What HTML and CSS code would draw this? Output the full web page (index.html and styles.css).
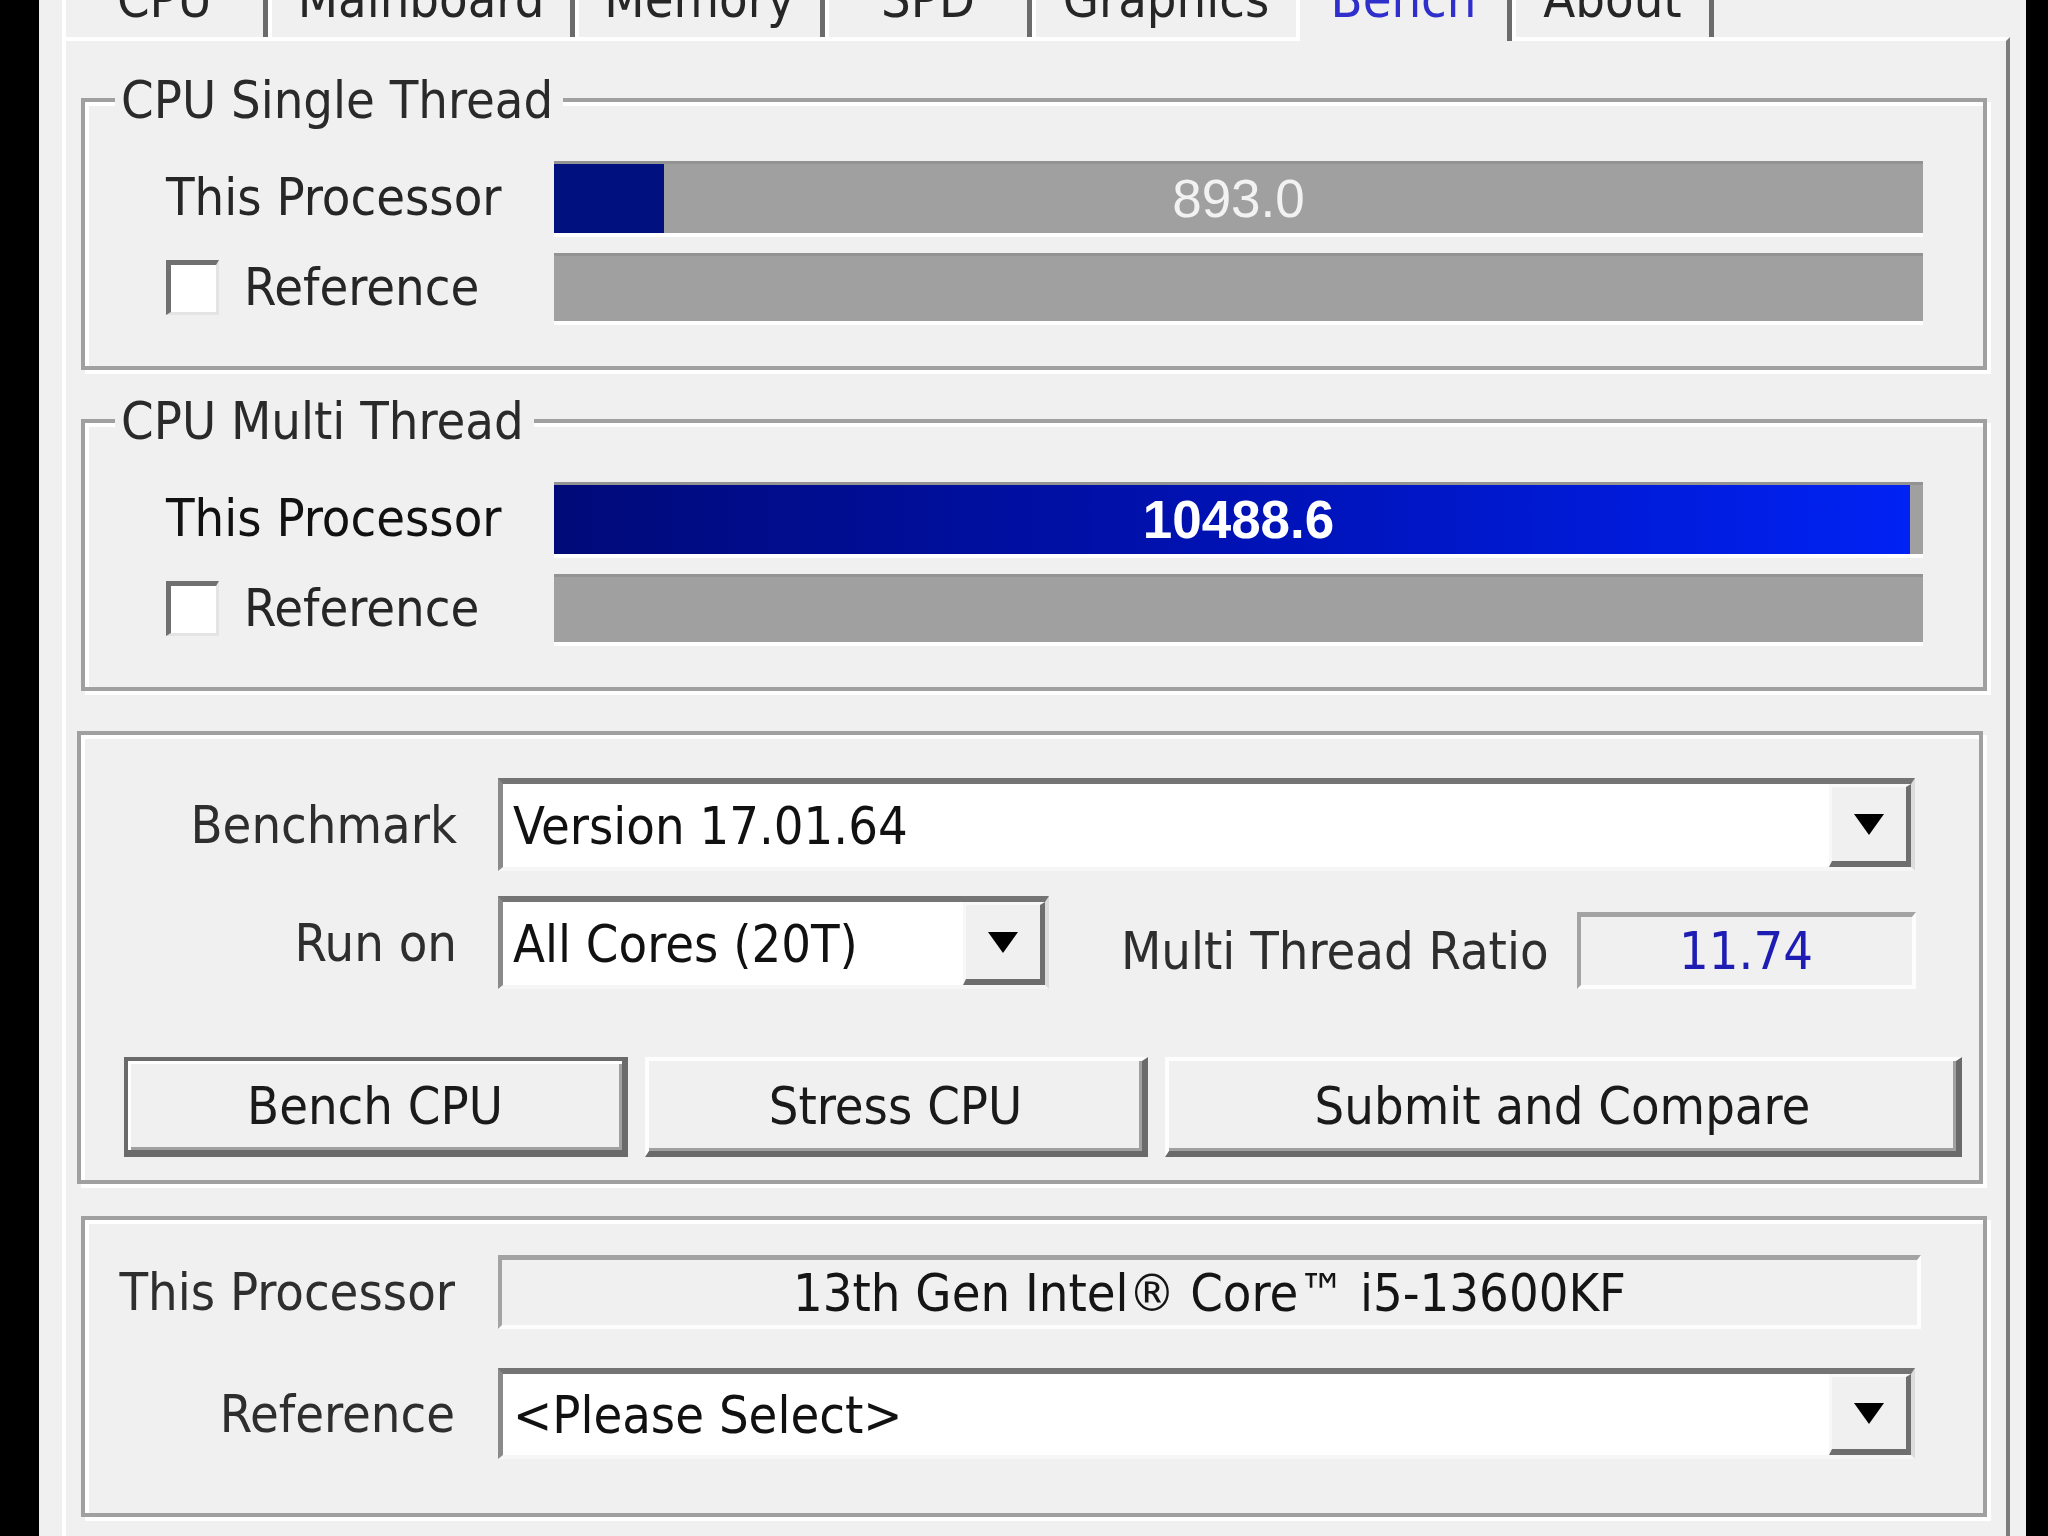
FILE: index.html
```html
<!DOCTYPE html>
<html lang="en">
<head>
    <meta charset="UTF-8">
    <meta name="viewport" content="width=device-width, initial-scale=1.0">
    <title>CPU-Z Bench</title>
    <link rel="stylesheet" href="styles.css">
</head>
<body>
    <div class="window">
        <!-- Tabs -->
        <div class="tabs">
            <div class="tab tab-cpu"><span>CPU</span></div>
            <div class="tab tab-mainboard"><span>Mainboard</span></div>
            <div class="tab tab-memory"><span>Memory</span></div>
            <div class="tab tab-spd"><span>SPD</span></div>
            <div class="tab tab-graphics"><span>Graphics</span></div>
            <div class="tab tab-bench active"><span>Bench</span></div>
            <div class="tab tab-about"><span>About</span></div>
        </div>

        <div class="panel">
            <!-- Single thread -->
            <fieldset class="group group-single">
                <legend>CPU Single Thread</legend>
                <div class="score-rows">
                    <div class="score-label">This Processor</div>
                    <div class="bar">
                        <div class="bar-fill" style="width: 8%"></div>
                        <div class="bar-value">893.0</div>
                    </div>
                    <div class="score-label check-label"><span class="checkbox"></span>Reference</div>
                    <div class="bar"></div>
                </div>
            </fieldset>

            <!-- Multi thread -->
            <fieldset class="group group-multi">
                <legend>CPU Multi Thread</legend>
                <div class="score-rows">
                    <div class="score-label dark">This Processor</div>
                    <div class="bar">
                        <div class="bar-fill fill-multi" style="width: 99.05%"></div>
                        <div class="bar-value bold">10488.6</div>
                    </div>
                    <div class="score-label check-label"><span class="checkbox"></span>Reference</div>
                    <div class="bar"></div>
                </div>
            </fieldset>

            <!-- Settings and buttons -->
            <fieldset class="group group-bench">
                <div class="form-row">
                    <div class="form-label">Benchmark</div>
                    <div class="combo combo-wide">
                        <div class="combo-text">Version 17.01.64</div>
                        <div class="drop"><svg width="30" height="21" viewBox="0 0 30 21"><polygon points="0,0 30,0 15,21" fill="#000"/></svg></div>
                    </div>
                </div>
                <div class="form-row row-run">
                    <div class="form-label">Run on</div>
                    <div class="combo combo-short">
                        <div class="combo-text">All Cores (20T)</div>
                        <div class="drop"><svg width="30" height="21" viewBox="0 0 30 21"><polygon points="0,0 30,0 15,21" fill="#000"/></svg></div>
                    </div>
                    <div class="ratio">
                        <div class="ratio-label">Multi Thread Ratio</div>
                        <div class="field field-ratio">11.74</div>
                    </div>
                </div>
                <div class="button-row">
                    <button class="btn btn-default btn-bench">Bench CPU</button>
                    <button class="btn btn-stress">Stress CPU</button>
                    <button class="btn btn-submit">Submit and Compare</button>
                </div>
            </fieldset>

            <!-- Processor names -->
            <fieldset class="group group-name">
                <div class="form-row">
                    <div class="form-label">This Processor</div>
                    <div class="field field-name">13th Gen Intel® Core™ i5-13600KF</div>
                </div>
                <div class="form-row">
                    <div class="form-label">Reference</div>
                    <div class="combo combo-wide">
                        <div class="combo-text">&lt;Please Select&gt;</div>
                        <div class="drop"><svg width="30" height="21" viewBox="0 0 30 21"><polygon points="0,0 30,0 15,21" fill="#000"/></svg></div>
                    </div>
                </div>
            </fieldset>
        </div>
    </div>
</body>
</html>
```

FILE: styles.css
```css
body {
    margin: 0;
    background-color: #000;
    font-family: "DejaVu Sans Condensed", "DejaVu Sans", sans-serif;
    font-stretch: condensed;
    font-size: 52px;
    color: #262626;
    overflow: hidden;
}
.window {
    margin-left: 39px;
    width: 1987px;
    height: 1536px;
    background-color: #f0f0f0;
    display: flex;
    flex-direction: column;
}

/* tabs */
.tabs {
    display: flex;
    align-items: flex-end;
    height: 37px;
    padding-left: 23px;
}
.tab {
    box-sizing: border-box;
    height: 37px;
    border-left: 4px solid #fff;
    border-right: 5px solid #6b6b6b;
    background-color: #f0f0f0;
    text-align: center;
    line-height: 52px;
    white-space: nowrap;
}
.tab span {
    display: block;
    margin-top: -27px;
}
.tab-cpu { width: 206px; }
.tab-mainboard { width: 307px; }
.tab-memory { width: 250px; }
.tab-spd { width: 207px; }
.tab-graphics { width: 264px; border-right: none; }
.tab-bench { width: 216px; }
.tab-about { width: 202px; }
.tab.active {
    height: 41px;
    margin-bottom: -4px;
    position: relative;
    z-index: 1;
    color: #2f2fcc;
}

.panel {
    flex: 1;
    margin: 0 16px 0 23px;
    border-top: 4px solid #fff;
    border-left: 4px solid #fff;
    border-right: 4px solid #7d7d7d;
}

/* group boxes */
.group {
    margin: 0 19px 0 15px;
    padding: 0 60px 45px 0;
    border: 4px solid #a0a0a0;
    box-shadow: inset 4px 4px 0 #fff, 4px 4px 0 #fff;
    min-inline-size: 0;
}
.group legend {
    margin-left: 30px;
    padding: 0 10px 0 6px;
    line-height: 52px;
    background-color: #f0f0f0;
    color: #2a2a2a;
}
.group-single { margin-top: 33px; }
.group-multi { margin-top: 25px; }

.score-rows {
    display: grid;
    grid-template-columns: 388px 1fr;
    grid-template-rows: 72px 68px;
    row-gap: 20px;
    align-items: center;
    padding: 35px 0 0 81px;
}
.score-label {
    line-height: 52px;
    white-space: nowrap;
}
.score-label.dark { color: #111; }
.check-label {
    display: flex;
    align-items: center;
    gap: 25px;
}
.checkbox {
    box-sizing: border-box;
    width: 53px;
    height: 55px;
    background-color: #fff;
    border-style: solid;
    border-width: 5px 3px 3px 5px;
    border-color: #707070 #e4e4e4 #e4e4e4 #707070;
}
.bar {
    align-self: stretch;
    display: grid;
    background-color: #a0a0a0;
    border-top: 3px solid #939393;
    box-shadow: 0 4px 0 #fff;
}
.bar-fill {
    grid-area: 1 / 1;
    background-color: #00107e;
}
.fill-multi {
    background: linear-gradient(to right, #000a78, #0012b4 50%, #0022f4);
}
.bar-value {
    grid-area: 1 / 1;
    align-self: center;
    justify-self: center;
    font-family: "Liberation Sans", Arial, sans-serif;
    font-stretch: normal;
    font-size: 53px;
    line-height: 1;
    color: #f2f2f2;
}
.bar-value.bold {
    font-weight: bold;
    color: #fff;
}

/* bench settings */
.group-bench {
    margin: 40px 23px 0 11px;
    padding: 43px 0 23px 0;
}
.form-row {
    display: flex;
    align-items: center;
}
.form-row + .form-row { margin-top: 25px; }
.form-label {
    width: 376px;
    margin-right: 41px;
    text-align: right;
    line-height: 52px;
    color: #2e2e2e;
    white-space: nowrap;
}
.combo {
    box-sizing: border-box;
    display: flex;
    height: 93px;
    background-color: #fff;
    border-style: solid;
    border-width: 6px 4px 4px 5px;
    border-color: #747474 #dcdcdc #f6f6f6 #8a8a8a;
}
.combo-wide { width: 1417px; }
.combo-short { width: 551px; }
.combo-text {
    flex: 1;
    align-self: center;
    padding-left: 10px;
    line-height: 52px;
    color: #111;
    white-space: nowrap;
}
.drop {
    box-sizing: border-box;
    width: 82px;
    display: flex;
    align-items: center;
    justify-content: center;
    background-color: #f0f0f0;
    border-style: solid;
    border-width: 3px 5px 6px 3px;
    border-color: #f8f8f8 #6e6e6e #6e6e6e #f8f8f8;
}
.row-run { align-items: flex-start; }
.row-run .form-label { align-self: center; }
.ratio {
    align-self: flex-end;
    display: flex;
    align-items: center;
    margin-left: 72px;
}
.ratio-label {
    margin-right: 28px;
    line-height: 52px;
    color: #2e2e2e;
    white-space: nowrap;
}
.field {
    box-sizing: border-box;
    display: flex;
    align-items: center;
    justify-content: center;
    background-color: #f0f0f0;
    border-style: solid;
    border-width: 5px 4px 4px 4px;
    border-color: #a3a3a3 #fdfdfd #fdfdfd #a3a3a3;
    line-height: 52px;
    white-space: nowrap;
}
.field-ratio {
    width: 339px;
    height: 77px;
    color: #1d1db4;
}
.field-name {
    width: 1423px;
    height: 74px;
    color: #151515;
}

.button-row {
    display: flex;
    gap: 17px;
    margin-top: 68px;
    padding-left: 43px;
}
.btn {
    box-sizing: border-box;
    height: 100px;
    padding: 0;
    font-family: inherit;
    font-stretch: condensed;
    font-size: 52px;
    color: #1a1a1a;
    background-color: #f0f0f0;
    border-style: solid;
    border-width: 4px 6px 6px 4px;
    border-color: #fdfdfd #6a6a6a #6a6a6a #fdfdfd;
    box-shadow: inset -3px -3px 0 #a0a0a0;
}
.btn-default {
    border-color: #6a6a6a;
    border-width: 4px 6px 7px 4px;
    box-shadow: inset 3px 3px 0 #fff, inset -3px -3px 0 #a0a0a0;
}
.btn-bench { width: 504px; }
.btn-stress { width: 503px; }
.btn-submit { width: 797px; }

/* processor names */
.group-name {
    margin-top: 32px;
    padding: 35px 0 54px 0;
}
.group-name .form-label {
    width: 370px;
    margin-right: 43px;
}
.group-name .form-row + .form-row { margin-top: 39px; }
.group-name .combo { height: 91px; }
```
